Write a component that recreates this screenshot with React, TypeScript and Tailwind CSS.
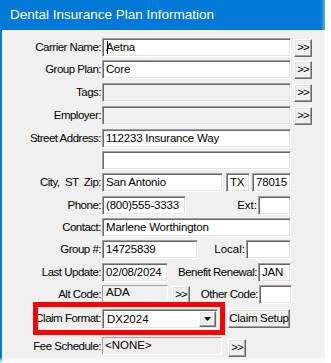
import type { ReactNode } from "react";

const sunken =
  "h-[19px] border border-t-[#a0a0a0] border-l-[#a0a0a0] border-b-white border-r-white shadow-[inset_1px_1px_0_#696969,inset_-1px_-1px_0_#e3e3e3] px-[3px] text-[11.5px] leading-[17px] tracking-[-0.2px] text-black whitespace-nowrap overflow-hidden";

const raised =
  "border border-t-white border-l-white border-b-[#696969] border-r-[#696969] shadow-[inset_-1px_-1px_0_#a0a0a0,inset_1px_1px_0_#e3e3e3] bg-[#f0f0f0] text-[11.5px] text-black flex items-center justify-center";

function Input({ w, value, grey }: { w: number; value?: string; grey?: boolean }) {
  return (
    <div className={`${sunken} ${grey ? "bg-[#f0f0f0]" : "bg-white"}`} style={{ width: w }}>
      {value}
    </div>
  );
}

function More({ className = "" }: { className?: string }) {
  return <div className={`${raised} h-[18px] w-[18px] tracking-[-1px] ${className}`}>&gt;&gt;</div>;
}

function Row({ label, top, children }: { label: string; top: number; children: ReactNode }) {
  return (
    <div className="flex items-start" style={{ marginTop: top }}>
      <div className="w-[100px] shrink-0 whitespace-pre pr-[1px] text-right text-[11.5px] leading-[19px] tracking-[-0.5px]">
        {label}
      </div>
      <div className="flex items-start">{children}</div>
    </div>
  );
}

export default function App() {
  return (
    <div className="relative h-[363px] w-[331px] overflow-hidden bg-white font-['Liberation_Sans',Arial,sans-serif]">
      <div className="flex h-full w-[325px] flex-col border-l-2 border-[#0078d7] bg-[#f0f0f0]">
        <div className="flex h-[30px] shrink-0 items-center bg-[#0078d7] pl-[8px] text-[13.5px] text-white">
          Dental Insurance Plan Information
        </div>

        <Row label="Carrier Name:" top={8}>
          <div className="relative">
            <Input w={189} value="Aetna" />
            <div className="absolute left-[5px] top-[3px] h-[13px] w-px bg-black" />
          </div>
          <More className="ml-[3px] mt-[1px]" />
        </Row>
        <Row label="Group Plan:" top={3}>
          <Input w={189} value="Core" />
          <More className="ml-[3px] mt-[1px]" />
        </Row>
        <Row label="Tags:" top={4}>
          <Input w={189} grey />
          <More className="ml-[3px] mt-[1px]" />
        </Row>
        <Row label="Employer:" top={4}>
          <Input w={189} grey />
          <More className="ml-[3px] mt-[1px]" />
        </Row>
        <Row label="Street Address:" top={4}>
          <Input w={189} value="112233 Insurance Way" />
        </Row>
        <Row label="" top={3}>
          <Input w={189} />
        </Row>
        <Row label="City,  ST  Zip:" top={3}>
          <Input w={121} value="San Antonio" />
          <div className="ml-[3px]">
            <Input w={24} value="TX" />
          </div>
          <div className="ml-[2px]">
            <Input w={39} value="78015" />
          </div>
        </Row>
        <Row label="Phone:" top={4}>
          <Input w={84} value="(800)555-3333" />
          <div className="w-[72px] pr-[1px] text-right text-[11.5px] leading-[19px]">Ext:</div>
          <Input w={33} />
        </Row>
        <Row label="Contact:" top={3}>
          <Input w={189} value="Marlene Worthington" />
        </Row>
        <Row label="Group #:" top={3}>
          <Input w={96} value="14725839" />
          <div className="w-[48px] pr-[1px] text-right text-[11.5px] leading-[19px]">Local:</div>
          <Input w={45} />
        </Row>
        <Row label="Last Update:" top={4}>
          <Input w={66} value="02/08/2024" />
          <div className="w-[90px] pr-[1px] text-right text-[11.5px] leading-[19px] tracking-[-0.5px]">
            Benefit Renewal:
          </div>
          <Input w={33} value="JAN" />
        </Row>
        <Row label="Alt Code:" top={3}>
          <div className="h-[19px] w-[66px] border border-t-[#a0a0a0] border-l-[#a0a0a0] border-b-white border-r-white bg-[#f0f0f0] px-[3px] text-[11.5px] leading-[13px]">
            ADA
          </div>
          <More className="ml-[4px] mt-[1px]" />
          <div className="w-[69px] pr-[1px] text-right text-[11.5px] leading-[19px] tracking-[-0.5px]">Other Code:</div>
          <Input w={33} />
        </Row>
        <div className="relative">
          <div className="pointer-events-none absolute left-[31px] top-[-2px] h-[33px] w-[192px] border-[5px] border-[#ff0000]" />
          <Row label="Claim Format:" top={5}>
            <div className="flex h-[20px] w-[116px] items-center border border-t-[#a0a0a0] border-l-[#a0a0a0] border-b-white border-r-white bg-white shadow-[inset_1px_1px_0_#696969,inset_-1px_-1px_0_#e3e3e3]">
              <div className="flex-1 pl-[4px] text-[11.5px] leading-[17px]">DX2024</div>
              <div className={`${raised} mr-[1px] h-[16px] w-[17px]`}>
                <svg width="7" height="4" viewBox="0 0 7 4">
                  <path d="M0 0h7L3.5 4z" fill="#000" />
                </svg>
              </div>
            </div>
            <div className={`${raised} ml-[10px] h-[19px] w-[62px] tracking-[-0.3px]`}>Claim Setup</div>
          </Row>
        </div>
        <Row label="Fee Schedule:" top={8}>
          <div className="h-[18px] w-[120px] border border-t-[#a0a0a0] border-l-[#a0a0a0] border-b-white border-r-white bg-[#f0f0f0] px-[2px] text-[11.5px] leading-[14px]">
            &lt;NONE&gt;
          </div>
          <More className="ml-[6px] mt-[2px]" />
        </Row>
      </div>
      <div className="pointer-events-none absolute right-0 top-0 h-full w-[10px] bg-gradient-to-r from-transparent to-white" />
      <div className="pointer-events-none absolute bottom-0 left-0 h-[6px] w-full bg-gradient-to-b from-transparent to-white" />
    </div>
  );
}
